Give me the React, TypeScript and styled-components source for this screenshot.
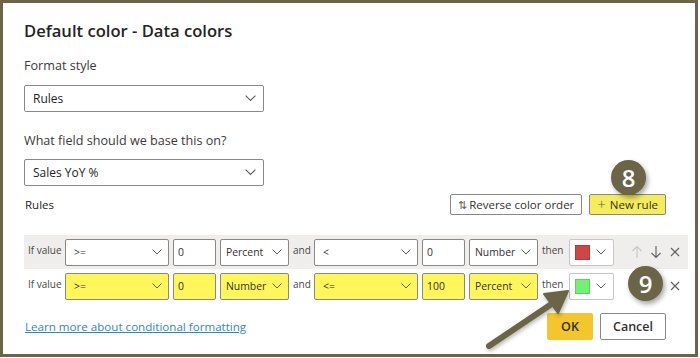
import styled, { createGlobalStyle } from 'styled-components';

const GlobalStyle = createGlobalStyle`
  html, body {
    margin: 0;
    padding: 0;
    background: #ffffff;
  }
  body {
    font-family: "Open Sans", "Noto Sans", sans-serif;
    color: #252423;
  }
`;

const olive = '#6b6446';

function Chevron({ size = 10 }: { size?: number }) {
  return (
    <svg width={size} height={size / 2 + 1} viewBox="0 0 10 6">
      <path d="M0.5 0.5 L5 5 L9.5 0.5" fill="none" stroke="#605e5c" strokeWidth="1" />
    </svg>
  );
}

function ArrowIcon({ dir, color }: { dir: 'up' | 'down'; color: string }) {
  const d = dir === 'up' ? 'M6 1.5 V13 M1.5 6 L6 1.5 L10.5 6' : 'M6 1 V12.5 M1.5 8 L6 12.5 L10.5 8';
  return (
    <svg width="12" height="14" viewBox="0 0 12 14">
      <path d={d} fill="none" stroke={color} strokeWidth="1.1" />
    </svg>
  );
}

function CloseIcon() {
  return (
    <svg width="10" height="10" viewBox="0 0 10 10">
      <path d="M1 1 L9 9 M9 1 L1 9" fill="none" stroke="#605e5c" strokeWidth="1.1" />
    </svg>
  );
}

export default function App() {
  return (
    <>
      <GlobalStyle />
      <Frame>
        <Title>Default color - Data colors</Title>
        <FieldLabel>Format style</FieldLabel>
        <BigSelect>
          <span>Rules</span>
          <Chevron size={11} />
        </BigSelect>
        <FieldLabel $gap={20}>What field should we base this on?</FieldLabel>
        <BigSelect $gap={9}>
          <span>Sales YoY %</span>
          <Chevron size={11} />
        </BigSelect>

        <RulesHeader>
          <SmallLabel>Rules</SmallLabel>
          <HeaderButtons>
            <ToolButton>
              <SortIcon>⇅</SortIcon>
              Reverse color order
            </ToolButton>
            <ToolButton $yellow>
              <PlusIcon>+</PlusIcon>
              New rule
            </ToolButton>
          </HeaderButtons>
        </RulesHeader>

        <RuleList>
          <RuleRow $shaded>
            <RowText $w={33}>If value</RowText>
            <Field $w={104} $pad={8}>
              <span>&gt;=</span>
              <Chevron />
            </Field>
            <Field $w={43}>
              <span>0</span>
            </Field>
            <Field $w={69} $pad={5}>
              <span>Percent</span>
              <Chevron />
            </Field>
            <RowText $w={17}>and</RowText>
            <Field $w={104} $pad={8}>
              <span>&lt;</span>
              <Chevron />
            </Field>
            <Field $w={43}>
              <span>0</span>
            </Field>
            <Field $w={69} $pad={5}>
              <span>Number</span>
              <Chevron />
            </Field>
            <RowText $w={23}>then</RowText>
            <ColorField>
              <Swatch $color="#d04545" />
              <Chevron />
            </ColorField>
            <RowIcons>
              <RowIcon>
                <ArrowIcon dir="up" color="#c8c6c4" />
              </RowIcon>
              <RowIcon>
                <ArrowIcon dir="down" color="#605e5c" />
              </RowIcon>
              <RowIcon>
                <CloseIcon />
              </RowIcon>
            </RowIcons>
          </RuleRow>
          <RuleRow>
            <RowText $w={33}>If value</RowText>
            <Field $w={104} $pad={8} $yellow>
              <span>&gt;=</span>
              <Chevron />
            </Field>
            <Field $w={43} $yellow>
              <span>0</span>
            </Field>
            <Field $w={69} $pad={5} $yellow>
              <span>Number</span>
              <Chevron />
            </Field>
            <RowText $w={17}>and</RowText>
            <Field $w={104} $pad={8} $yellow>
              <span>&lt;=</span>
              <Chevron />
            </Field>
            <Field $w={43} $yellow>
              <span>100</span>
            </Field>
            <Field $w={69} $pad={5} $yellow>
              <span>Percent</span>
              <Chevron />
            </Field>
            <RowText $w={23}>then</RowText>
            <ColorField>
              <Swatch $color="#72f274" />
              <Chevron />
            </ColorField>
            <RowIcons>
              <RowIcon />
              <RowIcon />
              <RowIcon>
                <CloseIcon />
              </RowIcon>
            </RowIcons>
          </RuleRow>
        </RuleList>

        <Footer>
          <LearnLink href="#">Learn more about conditional formatting</LearnLink>
          <FooterButtons>
            <DialogButton $primary $w={46}>OK</DialogButton>
            <DialogButton $w={66}>Cancel</DialogButton>
          </FooterButtons>
        </Footer>

        <Badge style={{ left: 608, top: 157 }}>8</Badge>
        <Badge style={{ left: 625, top: 263 }}>9</Badge>
        <Pointer width="110" height="80" viewBox="0 0 110 80">
          <line x1="9" y1="73" x2="76" y2="28" stroke={olive} strokeWidth="6" strokeLinecap="round" />
          <polygon points="88,18 64,21 78,40" fill={olive} stroke={olive} strokeWidth="2" strokeLinejoin="round" />
        </Pointer>
      </Frame>
    </>
  );
}

const Frame = styled.div`
  position: relative;
  box-sizing: border-box;
  width: 698px;
  height: 357px;
  border: 3px solid ${olive};
  background: #ffffff;
  padding: 17px 0 0 21px;
  display: flex;
  flex-direction: column;
  align-items: flex-start;
`;

const Title = styled.div`
  font-size: 16.6px;
  font-weight: 600;
  line-height: 22px;
  color: #252423;
`;

const FieldLabel = styled.div<{ $gap?: number }>`
  margin-top: ${(p) => p.$gap ?? 15}px;
  font-size: 12.6px;
  line-height: 18px;
  color: #3b3a39;
`;

const BigSelect = styled.div<{ $gap?: number }>`
  margin-top: ${(p) => p.$gap ?? 10}px;
  box-sizing: border-box;
  width: 240px;
  height: 27px;
  border: 1px solid #8a8886;
  border-radius: 2px;
  padding: 0 7px 0 8px;
  display: flex;
  align-items: center;
  justify-content: space-between;
  font-size: 12px;
  color: #252423;
`;

const RulesHeader = styled.div`
  margin-top: 8px;
  width: 642px;
  display: flex;
  align-items: center;
  justify-content: space-between;
`;

const SmallLabel = styled.div`
  font-size: 11.5px;
  color: #252423;
  padding-left: 1px;
`;

const HeaderButtons = styled.div`
  display: flex;
  gap: 7px;
`;

const ToolButton = styled.div<{ $yellow?: boolean }>`
  box-sizing: border-box;
  height: 21px;
  padding: 0 7px;
  display: flex;
  align-items: center;
  gap: 4px;
  border: 1px solid #8a8886;
  border-radius: 2px;
  background: ${(p) => (p.$yellow ? '#f4ec5b' : '#ffffff')};
  font-size: 11.5px;
  color: #323130;
  white-space: nowrap;
`;

const SortIcon = styled.span`
  font-size: 11px;
  color: #605e5c;
  letter-spacing: -2px;
`;

const PlusIcon = styled.span`
  font-size: 15px;
  font-weight: 300;
  color: #605e5c;
  line-height: 1;
`;

const RuleList = styled.div`
  margin-top: 20px;
  display: flex;
  flex-direction: column;
`;

const RuleRow = styled.div<{ $shaded?: boolean }>`
  box-sizing: border-box;
  width: 664px;
  height: 34px;
  padding: 0 4px;
  display: flex;
  align-items: center;
  gap: 4px;
  background: ${(p) => (p.$shaded ? '#efeeed' : 'transparent')};
`;

const RowText = styled.div<{ $w: number }>`
  width: ${(p) => p.$w}px;
  font-size: 10px;
  color: #484644;
  margin-top: -5px;
  white-space: nowrap;
`;

const Field = styled.div<{ $w: number; $pad?: number; $yellow?: boolean }>`
  box-sizing: border-box;
  width: ${(p) => p.$w}px;
  height: 27px;
  padding: 0 6px 0 ${(p) => p.$pad ?? 4}px;
  border: 1px solid #8a8886;
  border-radius: 2px;
  background: ${(p) => (p.$yellow ? '#fff65a' : '#ffffff')};
  display: flex;
  align-items: center;
  justify-content: space-between;
  gap: 3px;
  font-size: 10.4px;
  color: #323130;
  white-space: nowrap;
`;

const ColorField = styled.div`
  box-sizing: border-box;
  width: 45px;
  height: 27px;
  padding: 0 7px 0 5px;
  border: 1px solid #c8c6c4;
  border-radius: 2px;
  background: #ffffff;
  display: flex;
  align-items: center;
  justify-content: space-between;
`;

const Swatch = styled.div<{ $color: string }>`
  width: 13px;
  height: 13px;
  background: ${(p) => p.$color};
  border: 1px solid rgba(0, 0, 0, 0.15);
`;

const RowIcons = styled.div`
  margin-left: 11px;
  display: flex;
  gap: 3px;
`;

const RowIcon = styled.div`
  width: 16px;
  height: 16px;
  display: flex;
  align-items: center;
  justify-content: center;
`;

const Footer = styled.div`
  margin-top: 10px;
  width: 642px;
  display: flex;
  align-items: center;
  justify-content: space-between;
`;

const LearnLink = styled.a`
  font-size: 11.6px;
  color: #2f86d8;
  text-decoration: underline;
  padding-left: 1px;
`;

const FooterButtons = styled.div`
  display: flex;
  gap: 7px;
`;

const DialogButton = styled.div<{ $primary?: boolean; $w: number }>`
  box-sizing: border-box;
  height: 27px;
  width: ${(p) => p.$w}px;
  display: flex;
  align-items: center;
  justify-content: center;
  border-radius: 2px;
  border: 1px solid ${(p) => (p.$primary ? '#f2c62c' : '#8a8886')};
  background: ${(p) => (p.$primary ? '#f2c62c' : '#ffffff')};
  font-size: 12.5px;
  font-weight: 600;
  color: #323130;
`;

const Badge = styled.div`
  position: absolute;
  width: 35px;
  height: 35px;
  border-radius: 50%;
  background: ${olive};
  color: #ffffff;
  font-size: 24px;
  font-weight: 600;
  display: flex;
  align-items: center;
  justify-content: center;
  box-shadow: 2px 3px 5px rgba(0, 0, 0, 0.35);
`;

const Pointer = styled.svg`
  position: absolute;
  left: 477px;
  top: 270px;
  overflow: visible;
  filter: drop-shadow(1px 2px 2px rgba(0, 0, 0, 0.3));
`;
